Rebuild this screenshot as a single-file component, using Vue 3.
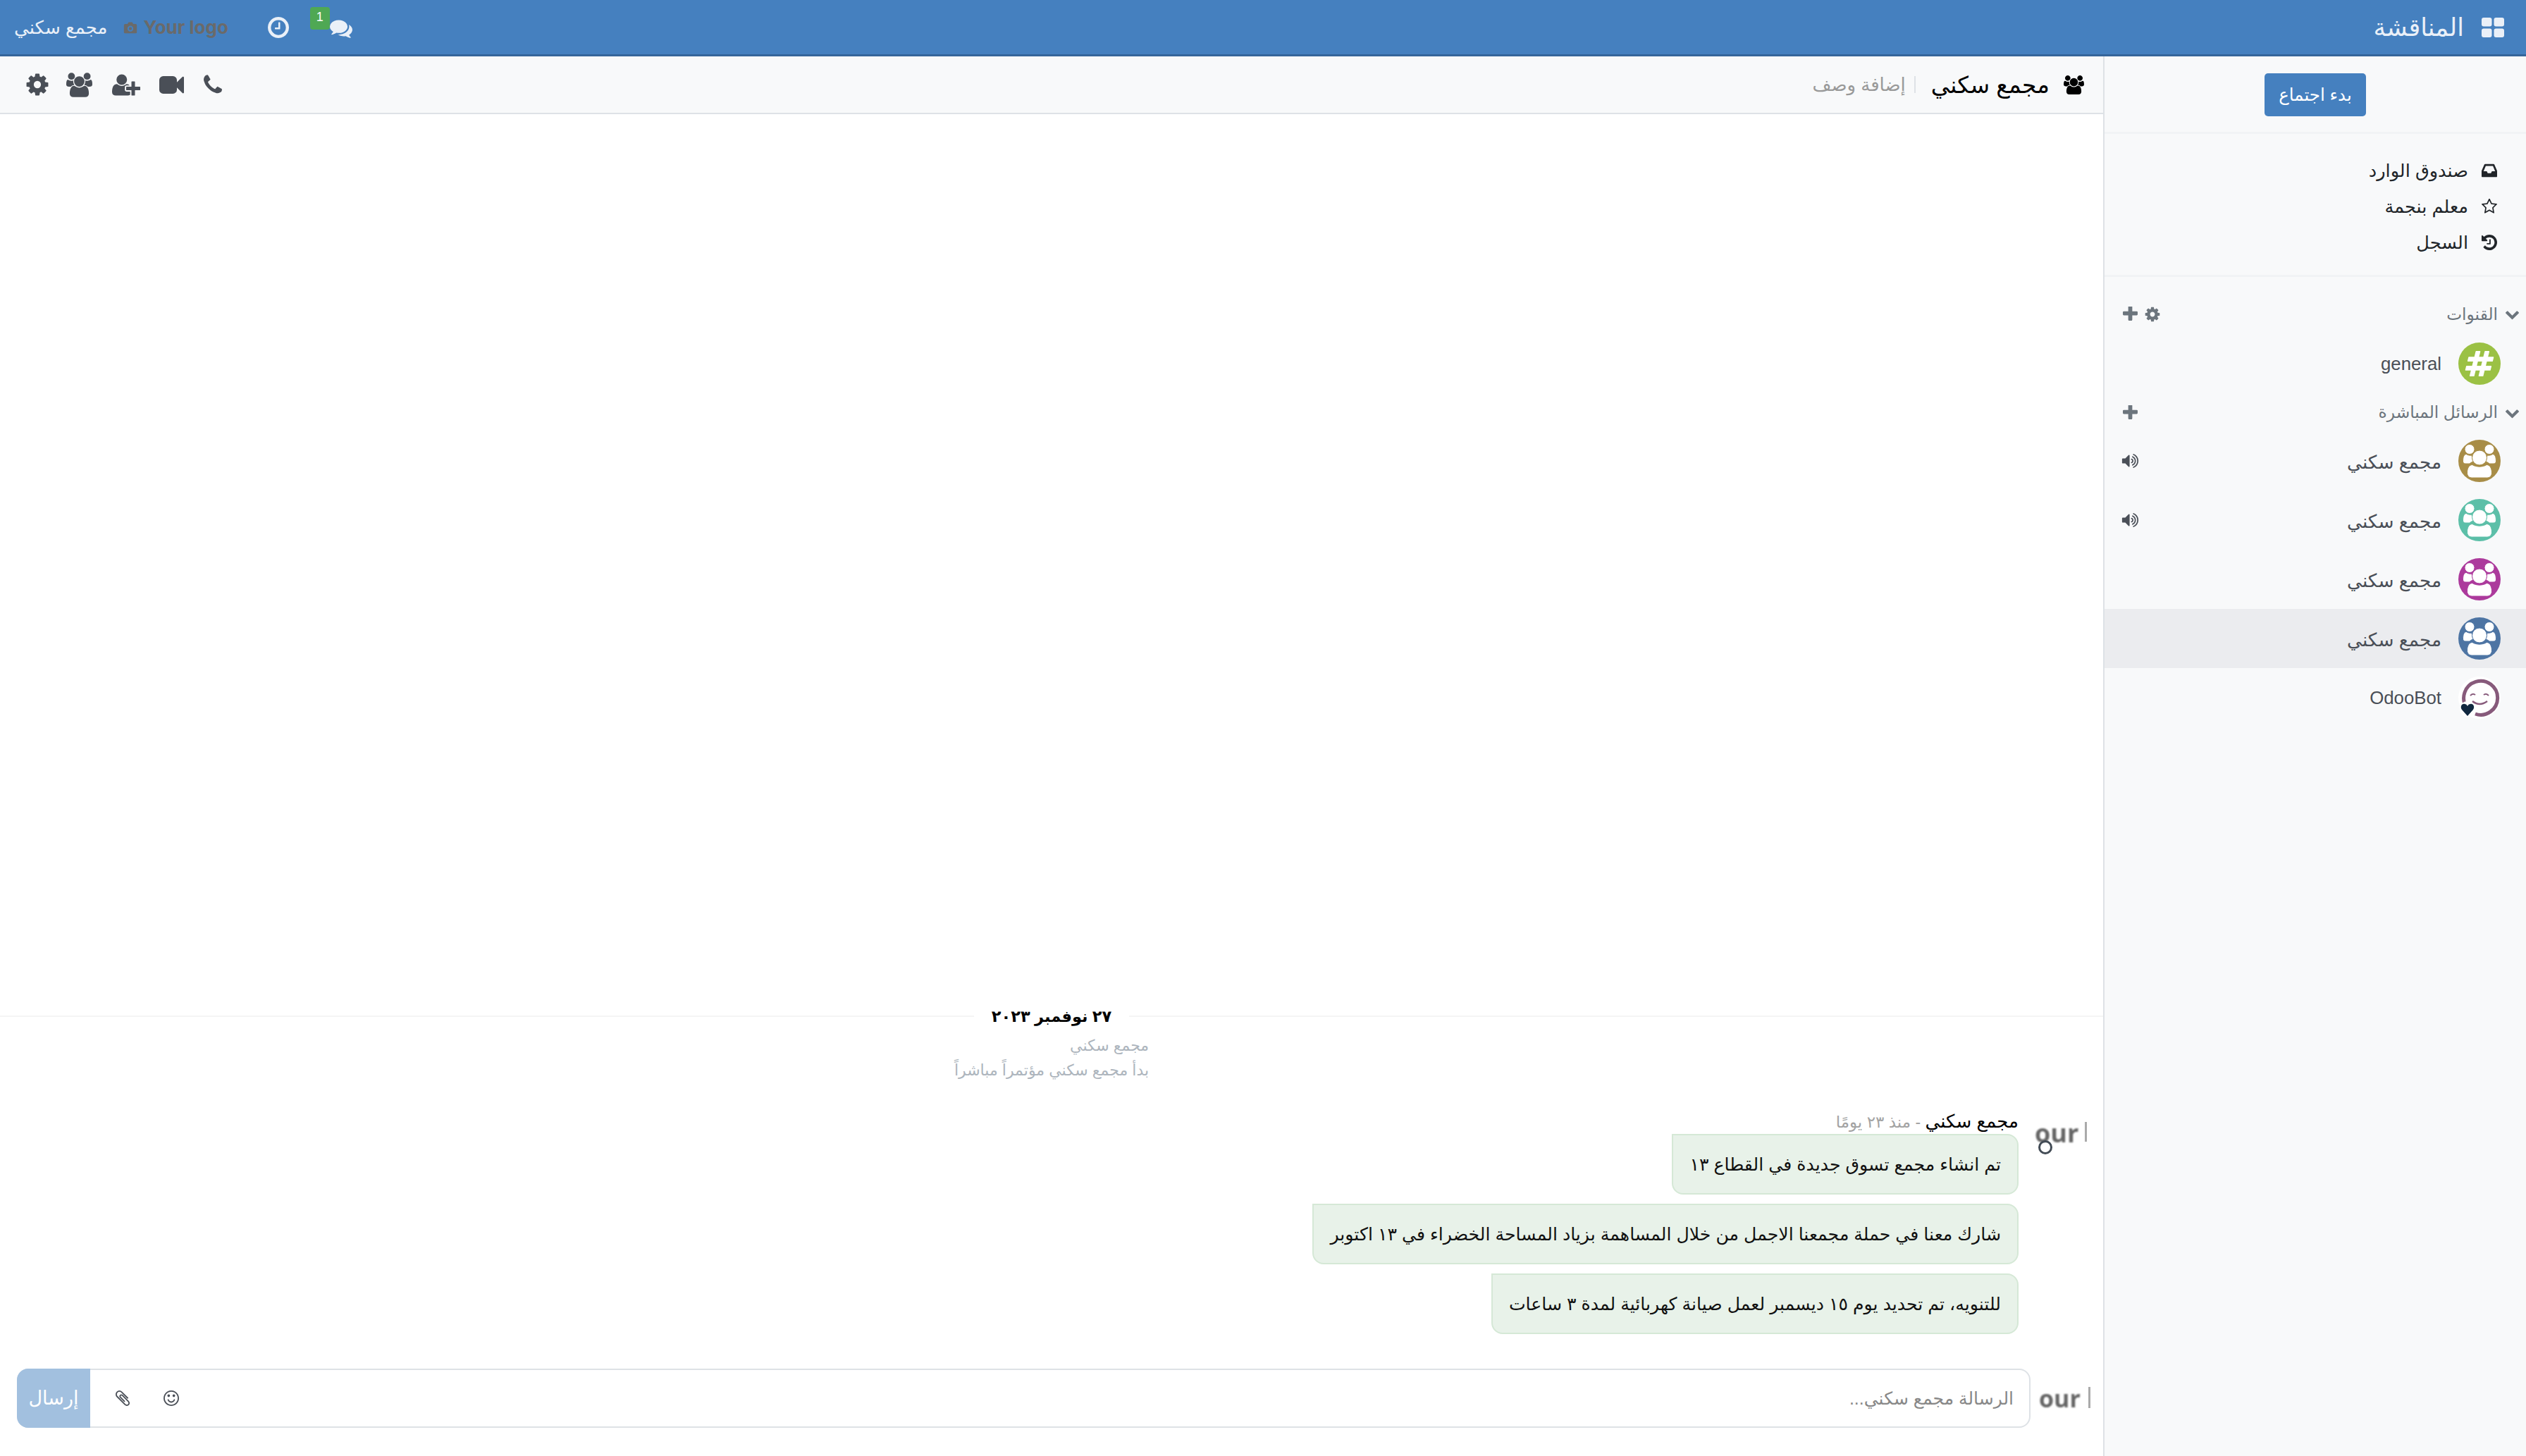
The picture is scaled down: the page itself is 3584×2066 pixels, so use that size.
<template>
  <div class="app" dir="rtl">
    <!-- 图标精灵 -->
    <svg class="sprite" width="0" height="0" aria-hidden="true">
      <symbol id="i-gear" viewBox="0 0 1792 1792"><path d="M1152 896q0-106-75-181t-181-75-181 75-75 181 75 181 181 75 181-75 75-181zm512-109v222q0 12-8 23t-20 13l-185 28q-19 54-39 91 35 50 107 138 10 12 10 25t-9 23q-27 37-99 108t-94 71q-12 0-26-9l-138-108q-44 23-91 38-16 136-29 186-7 28-36 28h-222q-14 0-24.500-8.500t-11.500-21.500l-28-184q-49-16-90-37l-141 107q-10 9-25 9-14 0-25-11-126-114-165-168-7-10-7-23 0-12 8-23 15-21 51-66.500t54-70.500q-27-50-41-99l-183-27q-13-2-21-12.500t-8-23.500v-222q0-12 8-23t19-13l186-28q14-46 39-92-40-57-107-138-10-12-10-24 0-10 9-23 26-36 98.500-107.500t94.500-71.500q13 0 26 10l138 107q44-23 91-38 16-136 29-186 7-28 36-28h222q14 0 24.500 8.500t11.500 21.500l28 184q49 16 90 37l142-107q9-9 24-9 13 0 25 10 129 119 165 170 7 8 7 22 0 12-8 23-15 21-51 66.500t-54 70.500q26 50 41 98l183 28q13 2 21 12.500t8 23.500z"/></symbol>
      <symbol id="i-users" viewBox="0 0 1920 1792"><path d="M593 896q-162 5-265 128h-134q-82 0-138-40.500t-56-118.500q0-353 124-353 6 0 43.500 21t97.500 42.500 119 21.500q67 0 133-23-5 37-5 66 0 139 81 256zm1071 637q0 120-73 189.500t-194 69.500h-874q-121 0-194-69.500t-73-189.500q0-53 3.500-103.500t14-109 26.500-108.500 43-97.500 62-81 85.500-53.500 111.500-20q10 0 43 21.500t73 48 107 48 135 21.500 135-21.500 107-48 73-48 43-21.500q61 0 111.500 20t85.500 53.500 62 81 43 97.500 26.500 108.500 14 109 3.500 103.500zm-1024-1277q0 106-75 181t-181 75-181-75-75-181 75-181 181-75 181 75 75 181zm704 384q0 159-112.500 271.500t-271.500 112.500-271.500-112.500-112.500-271.500 112.500-271.500 271.500-112.500 271.500 112.500 112.500 271.500zm576 225q0 78-56 118.500t-138 40.500h-134q-103-123-265-128 81-117 81-256 0-29-5-66 66 23 133 23 59 0 119-21.500t97.500-42.500 43.500-21q124 0 124 353zm-128-609q0 106-75 181t-181 75-181-75-75-181 75-181 181-75 181 75 75 181z"/></symbol>
      <symbol id="i-user-plus" viewBox="0 0 2048 1792"><path d="M704 896q-159 0-271.500-112.500t-112.500-271.500 112.500-271.500 271.500-112.500 271.500 112.500 112.500 271.500-112.500 271.500-271.500 112.500zm960 128h352q13 0 22.500 9.500t9.500 22.500v192q0 13-9.500 22.500t-22.500 9.500h-352v352q0 13-9.500 22.500t-22.500 9.500h-192q-13 0-22.500-9.500t-9.500-22.500v-352h-352q-13 0-22.500-9.500t-9.500-22.500v-192q0-13 9.500-22.500t22.500-9.500h352v-352q0-13 9.500-22.500t22.500-9.500h192q13 0 22.500 9.500t9.500 22.500v352zm-736 224q0 52 38 90t90 38h256v238q-68 50-171 50h-874q-121 0-194-69t-73-190q0-53 3.500-103.500t14-109 26.500-108.500 43-97.500 62-81 85.500-53.500 111.500-20q19 0 39 17 79 61 154.500 91.500t164.500 30.500 164.500-30.500 154.500-91.500q20-17 39-17 132 0 217 96h-223q-52 0-90 38t-38 90v192z"/></symbol>
      <symbol id="i-video" viewBox="0 0 1792 1792"><path d="M1792 352v1088q0 42-39 59-13 5-25 5-27 0-45-19l-403-403v166q0 119-84.500 203.500t-203.500 84.500h-704q-119 0-203.500-84.500t-84.500-203.500v-704q0-119 84.500-203.500t203.500-84.500h704q119 0 203.500 84.500t84.500 203.500v165l403-402q18-19 45-19 12 0 25 5 39 17 39 59z"/></symbol>
      <symbol id="i-phone" viewBox="0 0 1408 1792"><path d="M1408 1240q0 27-10 70.500t-21 68.500q-21 50-122 106-94 51-186 51-27 0-53-3.500t-57.500-12.500-47-14.500-55.500-20.500-49-18q-98-35-175-83-127-79-264-216t-216-264q-48-77-83-175-3-9-18-49t-20.500-55.500-14.500-47-12.500-57.500-3.500-53q0-92 51-186 56-101 106-122 25-11 68.500-21t70.500-10q14 0 21 3 18 6 53 76 11 19 30 54t35 63.500 31 53.500q3 4 17.500 25t21.500 35.500 7 28.500q0 20-28.500 50t-62 55-62 53-28.500 46q0 9 5 22.500t8.500 20.500 14 24 11.500 19q76 137 174 235t235 174q2 1 19 11.500t24 14 20.500 8.500 22.500 5q18 0 46-28.500t53-62 55-62 50-28.500q14 0 28.500 7t35.500 21.500 25 17.500q25 15 53.500 31t63.500 35 54 30q70 35 76 53 3 7 3 21z"/></symbol>
      <symbol id="i-plus" viewBox="192 192 1408 1408"><path d="M1600 736v192q0 40-28 68t-68 28h-416v416q0 40-28 68t-68 28h-192q-40 0-68-28t-28-68v-416h-416q-40 0-68-28t-28-68v-192q0-40 28-68t68-28h416v-416q0-40 28-68t68-28h192q40 0 68 28t28 68v416h416q40 0 68 28t28 68z"/></symbol>
      <symbol id="i-chevron" viewBox="0 200 1792 1400"><path d="M1683 808l-742 741q-19 19-45 19t-45-19l-742-741q-19-19-19-45.500t19-45.500l166-165q19-19 45-19t45 19l531 531 531-531q19-19 45-19t45 19l166 165q19 19 19 45.500t-19 45.500z"/></symbol>
      <symbol id="i-star" viewBox="64 128 1664 1536"><path d="M1201 1004l306-297-422-62-189-382-189 382-422 62 306 297-73 421 378-199 377 199zm527-357q0 22-26 48l-363 354 86 500q1 7 1 20 0 50-41 50-19 0-40-12l-449-236-449 236q-22 12-40 12-21 0-31.500-14.500t-10.500-35.500q0-6 2-20l86-500-364-354q-25-27-25-48 0-37 56-46l502-73 225-455q19-41 49-41t49 41l225 455 502 73q56 9 56 46z"/></symbol>
      <symbol id="i-inbox" viewBox="0 256 1536 1280"><path d="M1023 960h316q-1-3-2.500-8.500t-2.500-7.500l-212-496h-708l-212 496q-1 3-2.500 8.500t-2.500 7.500h316l95 192h320zm513 30v482q0 26-19 45t-45 19h-1408q-26 0-45-19t-19-45v-482q0-62 25-123l238-552q10-25 36.500-42t52.500-17h832q26 0 52.500 17t36.500 42l238 552q25 61 25 123z"/></symbol>
      <symbol id="i-history" viewBox="128 128 1536 1536"><path d="M1664 896q0 156-61 298t-164 245-245 164-298 61q-172 0-327-72.500t-264-204.500q-7-10-6.500-22.500t8.500-20.500l137-138q10-9 25-9 16 2 23 12 73 95 179 147t225 52q104 0 198.500-40.500t163.500-109.500 109.500-163.500 40.500-198.500-40.500-198.500-109.500-163.500-163.500-109.500-198.500-40.500q-98 0-188 35.500t-160 101.500l137 138q31 30 14 69-17 40-59 40h-448q-26 0-45-19t-19-45v-448q0-42 40-59 39-17 69 14l130 129q107-101 244.500-156.500t284.500-55.500q156 0 298 61t245 164 164 245 61 298zm-640-288v448q0 14-9 23t-23 9h-320q-14 0-23-9t-9-23v-64q0-14 9-23t23-9h224v-352q0-14 9-23t23-9h64q14 0 23 9t9 23z"/></symbol>
      <symbol id="i-clock" viewBox="128 128 1536 1536"><path d="M1024 544v448q0 14-9 23t-23 9h-320q-14 0-23-9t-9-23v-64q0-14 9-23t23-9h224v-352q0-14 9-23t23-9h64q14 0 23 9t9 23zm416 352q0-148-73-273t-198-198-273-73-273 73-198 198-73 273 73 273 198 198 273 73 273-73 198-198 73-273zm224 0q0 209-103 385.500t-279.500 279.500-385.500 103-385.500-103-279.500-279.500-103-385.500 103-385.500 279.500-279.500 385.500-103 385.500 103 279.500 279.500 103 385.500z"/></symbol>
      <symbol id="i-comments" viewBox="0 128 1792 1536"><path d="M1408 768q0 139-94 257t-256.500 186.500-353.500 68.500q-86 0-176-16-124 88-278 128-36 9-86 16h-3q-11 0-20.500-8t-11.500-21q-1-3-1-6.500t.5-6.500 2-6l2.500-5 3.500-5.500 4-5 4.500-5 4-4.500q5-6 23-25t26-29.500 22.500-29 25-38.500 20.500-44q-124-72-195-177t-71-224q0-139 94-257t256.500-186.500 353.500-68.500 353.500 68.500 256.500 186.500 94 257zm384 256q0 120-71 224.500t-195 176.500q10 24 20.500 44t25 38.500 22.500 29 26 29.500 23 25q1 1 4 4.500t4.500 5 4 5 3.500 5.500l2.500 5 2 6 .5 6.500-1 6.500q-3 14-13 22t-22 7q-50-7-86-16-154-40-278-128-90 16-176 16-271 0-472-132 58 4 88 4 161 0 309-45t264-129q125-92 192-212t67-254q0-77-23-152 129 71 204 178t75 230z"/></symbol>
      <symbol id="i-clip" viewBox="128 128 1536 1536"><path d="M1596 1385q0 117-79 196t-196 79q-135 0-235-100l-777-776q-113-115-113-271 0-159 110-270t269-111q158 0 273 113l605 606q10 10 10 22 0 16-30.500 46.500t-46.500 30.500q-13 0-23-10l-606-607q-79-77-181-77-106 0-179 75t-73 181q0 105 76 181l776 777q63 63 145 63 64 0 106-42t42-106q0-82-63-145l-581-581q-26-24-60-24-29 0-48 19t-19 48q0 32 25 59l410 410q10 10 10 22 0 16-31 47t-47 31q-12 0-22-10l-410-410q-63-61-63-149 0-82 57-139t139-57q88 0 149 63l581 581q100 98 100 235z"/></symbol>
      <symbol id="i-smile" viewBox="0 128 1536 1536"><path d="M1134 1075q-37 121-138 195t-228 74-228-74-138-195q-8-25 4-48.500t38-31.500q25-8 48.500 4t31.500 38q25 80 92.500 129.500t151.500 49.500 151.500-49.500 92.500-129.500q8-26 32-38t49-4 37 31.500 4 48.500zm-494-435q0 53-37.500 90.500t-90.500 37.500-90.500-37.500-37.500-90.500 37.500-90.500 90.500-37.500 90.500 37.500 37.500 90.500zm512 0q0 53-37.500 90.500t-90.500 37.500-90.500-37.500-37.500-90.500 37.500-90.500 90.500-37.500 90.500 37.500 37.500 90.500zm256 256q0-130-51-248.500t-136.500-204-204-136.500-248.500-51-248.500 51-204 136.500-136.500 204-51 248.500 51 248.500 136.500 204 204 136.500 248.500 51 248.500-51 204-136.500 136.500-204 51-248.500zm128 0q0 209-103 385.500t-279.500 279.500-385.500 103-385.500-103-279.500-279.500-103-385.500 103-385.500 279.500-279.500 385.500-103 385.500 103 279.500 279.500 103 385.500z"/></symbol>
      <symbol id="i-volume" viewBox="0 128 1792 1536"><path d="M832 352v1088q0 26-19 45t-45 19-45-19l-333-333h-262q-26 0-45-19t-19-45v-384q0-26 19-45t45-19h262l333-333q19-19 45-19t45 19 19 45zm384 544q0 76-42.500 141.500t-112.500 93.500q-10 5-25 5-26 0-45-18.500t-19-45.500q0-21 12-35.500t29-25 34-23 29-36 12-56.500-12-56.500-29-36-34-23-29-25-12-35.500q0-27 19-45.500t45-18.500q15 0 25 5 70 27 112.500 93t42.500 142zm256 0q0 153-85 282.500t-225 188.500q-13 5-25 5-27 0-46-19t-19-45q0-39 39-59 56-29 76-44 74-54 115.500-135.500t41.500-173.500-41.500-173.500-115.500-135.500q-20-15-76-44-39-20-39-59 0-26 19-45t45-19q13 0 26 5 140 59 225 188.500t85 282.500zm256 0q0 230-127 422.500t-338 283.500q-13 5-26 5-26 0-45-19t-19-45q0-36 39-59 7-4 22.500-10.500t22.500-10.500q46-25 82-51 123-91 192-227t69-289-69-289-192-227q-36-26-82-51-7-4-22.500-10.500t-22.500-10.500q-39-23-39-59 0-26 19-45t45-19q13 0 26 5 211 91 338 283.500t127 422.500z"/></symbol>
      <symbol id="i-hash" viewBox="0 0 1792 1792"><path d="M991 1024l64-256h-254l-64 256h254zm768-504l-56 224q-7 24-31 24h-327l-64 256h311q15 0 25 12 10 14 6 28l-56 224q-5 24-31 24h-327l-81 328q-7 24-31 24h-224q-16 0-26-12-9-12-6-28l78-312h-254l-81 328q-7 24-31 24h-225q-15 0-25-12-9-12-6-28l78-312h-311q-15 0-25-12-9-12-6-28l56-224q7-24 31-24h327l64-256h-311q-15 0-25-12-10-14-6-28l56-224q5-24 31-24h327l81-328q7-24 32-24h224q15 0 25 12 9 12 6 28l-78 312h254l81-328q7-24 32-24h224q15 0 25 12 9 12 6 28l-78 312h311q15 0 25 12 9 12 6 28z"/></symbol>
      <symbol id="i-apps" viewBox="0 0 32 28"><rect x="0" y="0" width="14.500" height="12.500" rx="3"/><rect x="17.500" y="0" width="14.500" height="12.500" rx="3"/><rect x="0" y="15.500" width="14.500" height="12.500" rx="3"/><rect x="17.500" y="15.500" width="14.500" height="12.500" rx="3"/></symbol>
      <symbol id="i-group" viewBox="0 0 60 60">
        <circle cx="30" cy="30" r="30" fill="currentColor"/>
        <g fill="#fff" stroke="currentColor" stroke-width="1">
          <circle cx="16" cy="13.500" r="7"/>
          <circle cx="44" cy="13.500" r="7"/>
          <path d="M6.500 31c0-7 1.500-10.500 5-10.500 2 1.500 5 2 7.500 1.500l2 9c-2 .5-4 2-5 3h-6c-2 0-3.500-1.500-3.500-3zM53.500 31c0-7-1.500-10.500-5-10.500-2 1.500-5 2-7.500 1.500l-2 9c2 .5 4 2 5 3h6c2 0 3.500-1.500 3.500-3z"/>
          <circle cx="30" cy="25.500" r="10.500"/>
          <path d="M12.500 47c0-7 3-11.500 7.500-11.500 5 3.500 15 3.500 20 0 4.500 0 7.500 4.500 7.500 11.500 0 4.500-3 7-7 7h-21c-4 0-7-2.500-7-7z"/>
        </g>
      </symbol>
      <symbol id="i-bot" viewBox="0 0 60 60">
        <circle cx="30" cy="30" r="30" fill="#fff"/>
        <path d="M12 44A24 24 0 1 1 24 53" fill="none" stroke="#875a7b" stroke-width="5"/>
        <path d="M17 27q3.500-4 7-1M36 26q3.500-3 7 1" fill="none" stroke="#875a7b" stroke-width="2"/>
        <path d="M20 35q10 8 21 0" fill="none" stroke="#875a7b" stroke-width="2.500"/>
        <circle cx="13" cy="46" r="11" fill="#fff"/>
        <path d="M13 56 5 47c-3-4 0-9 4-8 2 0 3 1 4 3 1-2 2-3 4-3 4-1 7 4 4 8z" fill="#10273f"/>
      </symbol>
    </svg>

    <header class="topbar">
      <div class="brand">
        <svg class="ic apps"><use href="#i-apps" /></svg>
        <span class="brand-name">المناقشة</span>
      </div>
      <div class="systray">
        <div class="tray-chat">
          <svg class="ic comments"><use href="#i-comments" /></svg>
          <span class="badge">1</span>
        </div>
        <svg class="ic clock"><use href="#i-clock" /></svg>
        <div class="logo" dir="ltr">
          <span class="logo-cam">
            <svg viewBox="0 0 24 22" class="ic cam"><path d="M1 7a2 2 0 0 1 2-2h4l2-3h6l2 3h4a2 2 0 0 1 2 2v12a2 2 0 0 1-2 2H3a2 2 0 0 1-2-2zM12 8a5 5 0 1 0 0 10 5 5 0 0 0 0-10z" /><circle cx="12" cy="13" r="2.500" /></svg>
          </span>
          <span>Your logo</span>
        </div>
        <span class="user-name">مجمع سكني</span>
      </div>
    </header>

    <div class="body">
      <aside class="sidebar">
        <div class="side-top">
          <button class="meet-btn">بدء اجتماع</button>
        </div>
        <nav class="side-nav">
          <div v-for="item in navItems" :key="item.label" class="nav-item">
            <svg class="ic nav-ic"><use :href="item.icon" /></svg>
            <span>{{ item.label }}</span>
          </div>
        </nav>

        <div class="cat cat-first">
          <svg class="ic chev"><use href="#i-chevron" /></svg>
          <span class="cat-name">القنوات</span>
          <div class="cat-actions">
            <svg class="ic act-gear"><use href="#i-gear" /></svg>
            <svg class="ic act-plus"><use href="#i-plus" /></svg>
          </div>
        </div>
        <div class="row">
          <span class="hash-av"><svg class="ic hash"><use href="#i-hash" /></svg></span>
          <span class="row-name latin">general</span>
        </div>

        <div class="cat">
          <svg class="ic chev"><use href="#i-chevron" /></svg>
          <span class="cat-name">الرسائل المباشرة</span>
          <div class="cat-actions">
            <svg class="ic act-plus"><use href="#i-plus" /></svg>
          </div>
        </div>
        <div v-for="dm in dms" :key="dm.color" class="row" :class="{ active: dm.active }">
          <svg class="group-av" :style="{ color: dm.color }"><use href="#i-group" /></svg>
          <span class="row-name arabic">مجمع سكني</span>
          <svg v-if="dm.sound" class="ic volume"><use href="#i-volume" /></svg>
        </div>
        <div class="row">
          <svg class="group-av"><use href="#i-bot" /></svg>
          <span class="row-name latin">OdooBot</span>
        </div>
      </aside>

      <main class="chat">
        <div class="chat-head">
          <svg class="ic head-users"><use href="#i-users" /></svg>
          <span class="chat-title">مجمع سكني</span>
          <span class="head-sep"></span>
          <span class="chat-desc">إضافة وصف</span>
          <div class="head-tools">
            <svg class="ic t-phone"><use href="#i-phone" /></svg>
            <svg class="ic t-video"><use href="#i-video" /></svg>
            <svg class="ic t-add"><use href="#i-user-plus" /></svg>
            <svg class="ic t-users"><use href="#i-users" /></svg>
            <svg class="ic t-gear"><use href="#i-gear" /></svg>
          </div>
        </div>

        <div class="thread">
          <div class="date-sep"><span>٢٧ نوفمبر ٢٠٢٣</span></div>
          <div class="notice">
            <div>مجمع سكني</div>
            <div>بدأ مجمع سكني مؤتمراً مباشراً</div>
          </div>
          <div class="msg">
            <div class="msg-av">
              <span class="logo-crop" dir="ltr">our</span>
              <span class="logo-bar"></span>
              <span class="ring"></span>
            </div>
            <div class="msg-body">
              <div class="msg-meta">
                <span class="author">مجمع سكني</span>
                <span class="when"> - منذ ٢٣ يومًا</span>
              </div>
              <div v-for="text in messages" :key="text" class="bubble">{{ text }}</div>
            </div>
          </div>
        </div>

        <div class="composer">
          <div class="comp-av">
            <span class="logo-crop" dir="ltr">our</span>
            <span class="logo-bar"></span>
          </div>
          <div class="comp-box">
            <span class="placeholder">الرسالة مجمع سكني...</span>
            <div class="comp-tools">
              <svg class="ic t-smile"><use href="#i-smile" /></svg>
              <svg class="ic t-clip"><use href="#i-clip" /></svg>
            </div>
            <button class="send">إرسال</button>
          </div>
        </div>
      </main>
    </div>
  </div>
</template>

<script setup>
const navItems = [
  { label: 'صندوق الوارد', icon: '#i-inbox' },
  { label: 'معلم بنجمة', icon: '#i-star' },
  { label: 'السجل', icon: '#i-history' },
]

const dms = [
  { color: '#a88d47', sound: true },
  { color: '#5cbfa8', sound: true },
  { color: '#ac3a9c' },
  { color: '#4d74a3', active: true },
]

const messages = [
  'تم انشاء مجمع تسوق جديدة في القطاع ١٣',
  'شارك معنا في حملة مجمعنا الاجمل من خلال المساهمة بزياد المساحة الخضراء في ١٣ اكتوبر',
  'للتنويه، تم تحديد يوم ١٥ ديسمبر لعمل صيانة كهربائية لمدة ٣ ساعات',
]
</script>

<style>
html, body { margin: 0; background: #fff; }
</style>

<style scoped>
.app {
  width: 3584px;
  height: 2066px;
  display: flex;
  flex-direction: column;
  overflow: hidden;
  font-family: "Liberation Sans", "DejaVu Sans", sans-serif;
  color: #212529;
  background: #fff;
}
.sprite { position: absolute; }
.ic { display: block; fill: currentColor; flex: none; }

/* 顶栏 */
.topbar {
  height: 80px;
  box-sizing: border-box;
  border-bottom: 3px solid #35659a;
  background: #4580bf;
  color: #eaf0f8;
  display: flex;
  align-items: center;
  justify-content: space-between;
  padding: 0 31px 0 20px;
}
.brand { display: flex; align-items: center; gap: 25px; }
.apps { width: 32px; height: 28px; }
.brand-name { font-size: 35px; line-height: 40px; }
.systray { display: flex; align-items: center; }
.tray-chat { position: relative; width: 60px; height: 40px; display: flex; align-items: center; margin-left: 30px; }
.comments { width: 32px; height: 28px; margin-top: 2px; }
.badge {
  position: absolute;
  left: 0;
  top: -9px;
  width: 28px;
  height: 32px;
  border-radius: 4px;
  background: #4fa854;
  color: #fff;
  font-size: 18px;
  line-height: 28px;
  text-align: center;
}
.clock { width: 30px; height: 30px; }
.logo {
  display: flex;
  align-items: center;
  gap: 8px;
  margin-right: 56px;
  color: #6a6a6a;
  font: bold 26px/40px Inter, "Liberation Sans", sans-serif;
}
.logo-cam { display: block; }
.cam { width: 20px; height: 20px; }
.user-name { margin-right: 23px; font-size: 26px; line-height: 40px; }

/* 主体 */
.body { flex: 1; min-height: 0; display: flex; }

/* 侧栏 */
.sidebar {
  width: 600px;
  flex: none;
  box-sizing: border-box;
  border-left: 2px solid #dee2e6;
  background: #f8f9fa;
}
.side-top {
  height: 110px;
  box-sizing: border-box;
  border-bottom: 3px solid #f1f3f5;
  padding-top: 24px;
  display: flex;
  justify-content: center;
}
.meet-btn {
  width: 144px;
  height: 61px;
  border: none;
  border-radius: 5px;
  background: #4580bf;
  color: #fff;
  font: 24.500px "Liberation Sans", "DejaVu Sans", sans-serif;
  padding: 0;
}
.side-nav {
  height: 203px;
  box-sizing: border-box;
  padding: 26px 41px 0 0;
  border-bottom: 3px solid #f1f3f5;
}
.nav-item {
  height: 51px;
  display: flex;
  align-items: center;
  gap: 19px;
  font-size: 25.600px;
}
.nav-ic { width: 22px; height: 22px; }

.cat {
  height: 54px;
  display: flex;
  align-items: center;
  padding: 0 9px 0 26px;
  gap: 10px;
  color: #6c757d;
  font-size: 23.300px;
}
.cat-first { margin-top: 24px; height: 57px; }
.chev { width: 21px; height: 17px; }
.cat-actions { margin-right: auto; display: flex; align-items: center; gap: 9px; }
.act-plus { width: 21px; height: 21px; }
.act-gear { width: 24px; height: 24px; }

.row {
  height: 84px;
  display: flex;
  align-items: center;
  gap: 24px;
  padding: 0 36px 0 24px;
  color: #4a4f57;
  font-size: 25px;
}
.row.active { background: #ebecef; }
.row-name { line-height: 30px; }
.latin { font-size: 25.800px; }
.arabic { font-size: 26.300px; padding-top: 3px; }
.hash-av {
  width: 60px;
  height: 60px;
  flex: none;
  border-radius: 50%;
  background: #9bc144;
  color: #fff;
  display: flex;
  align-items: center;
  justify-content: center;
}
.hash { width: 42px; height: 42px; }
.group-av { width: 60px; height: 60px; flex: none; display: block; }
.volume { width: 25px; height: 22px; margin-right: auto; color: #4a4f57; }

/* 会话区 */
.chat { flex: 1; min-width: 0; display: flex; flex-direction: column; }
.chat-head {
  height: 82px;
  box-sizing: border-box;
  flex: none;
  background: #f8f9fa;
  border-bottom: 2px solid #dee2e6;
  display: flex;
  align-items: center;
  padding: 0 27px 0 35px;
}
.head-users { width: 29px; height: 27px; color: #000; }
.chat-title { margin-right: 20px; font-size: 33px; color: #000; }
.head-sep { width: 2px; height: 24px; margin: 0 22px 0 12px; background: #dee2e6; }
.chat-desc { font-size: 26px; color: #999; }
.head-tools { margin-right: auto; display: flex; align-items: center; color: #4a4f57; }
.t-phone { width: 26px; height: 33px; }
.t-video { width: 35px; height: 35px; margin-right: 28px; }
.t-add { width: 40px; height: 35px; margin-right: 27px; }
.t-users { width: 37px; height: 35px; margin-right: 28px; }
.t-gear { width: 36px; height: 36px; margin-right: 23px; }

.thread {
  flex: 1;
  min-height: 0;
  display: flex;
  flex-direction: column;
  justify-content: flex-end;
  padding-bottom: 49px;
}
.date-sep {
  height: 40px;
  display: flex;
  align-items: center;
  justify-content: center;
  background: linear-gradient(#f5f5f5, #f5f5f5) center / 100% 2px no-repeat;
}
.date-sep span {
  padding: 0 25px;
  background: #fff;
  font-weight: bold;
  font-size: 22.500px;
  color: #000;
}
.notice {
  align-self: center;
  margin-top: 4px;
  font-size: 22px;
  line-height: 35px;
  color: #adb5bd;
}
.msg {
  margin-top: 42px;
  padding-right: 24px;
  display: flex;
  gap: 24px;
}
.msg-av, .comp-av {
  position: relative;
  width: 72px;
  height: 72px;
  flex: none;
}
.logo-crop {
  position: absolute;
  top: 10px;
  left: -1px;
  color: #666;
  font: bold 36px/40px "Open Sans", "Liberation Sans", sans-serif;
  filter: blur(1px);
}
.logo-bar {
  position: absolute;
  top: 14px;
  left: 70px;
  width: 3px;
  height: 28px;
  background: #aaa;
  filter: blur(.5px);
}
.ring {
  position: absolute;
  left: 4px;
  top: 40px;
  width: 20px;
  height: 20px;
  box-sizing: border-box;
  border: 3px solid #424b55;
  border-radius: 50%;
}
.msg-body { display: flex; flex-direction: column; align-items: flex-start; }
.msg-meta { height: 31px; line-height: 26px; }
.author { font-size: 26px; color: #000; }
.when { font-size: 23px; color: #a3a3a3; }
.bubble {
  box-sizing: border-box;
  height: 86px;
  margin-bottom: 13px;
  padding: 0 23px;
  display: flex;
  align-items: center;
  font-size: 25.200px;
  color: #111;
  background: #e8f2e9;
  border: 2px solid #d5e8d6;
  border-radius: 0 16px 16px 16px;
}
.bubble:last-child { margin-bottom: 0; }

.composer {
  height: 124px;
  flex: none;
  box-sizing: border-box;
  padding: 0 18px 40px 24px;
  display: flex;
  align-items: center;
  gap: 9px;
}
.comp-av { width: 76px; }
.comp-av .logo-crop { top: 16px; left: 3px; font-size: 34px; }
.comp-av .logo-bar { top: 20px; left: 73px; height: 30px; }
.comp-box {
  flex: 1;
  height: 84px;
  box-sizing: border-box;
  border: 2px solid #dee2e6;
  border-radius: 16px;
  display: flex;
  align-items: center;
  padding-right: 22px;
}
.placeholder { font-size: 25px; color: #888; }
.comp-tools { margin-right: auto; display: flex; align-items: center; gap: 47px; color: #4a4f57; }
.t-smile { width: 22px; height: 22px; }
.t-clip { width: 22px; height: 22px; }
.send {
  width: 104px;
  height: 84px;
  margin: 0 35px 0 -2px;
  border: none;
  border-radius: 16px 0 0 16px;
  background: #a2c0df;
  color: #fff;
  font: 27px "Liberation Sans", "DejaVu Sans", sans-serif;
  padding: 0;
  flex: none;
}
</style>
